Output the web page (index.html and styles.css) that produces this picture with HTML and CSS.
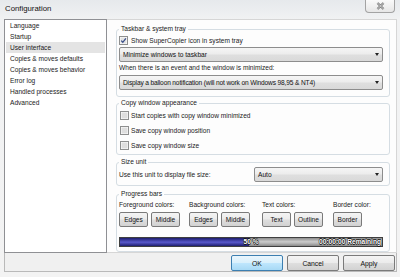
FILE: index.html
```html
<!DOCTYPE html>
<html>
<head>
<meta charset="utf-8">
<title>Configuration</title>
<link rel="stylesheet" href="styles.css">
</head>
<body>
<div class="window">
  <div class="titlebar">
    <span class="title">Configuration</span>
    <div class="close">
      <svg width="9" height="8" viewBox="0 0 9 8"><path d="M1.5 1 L7.5 7 M7.5 1 L1.5 7" stroke="#6d6d6d" stroke-width="2.2" fill="none"/><path d="M1.5 1 L7.5 7 M7.5 1 L1.5 7" stroke="#f4f4f4" stroke-width="0.8" fill="none"/></svg>
    </div>
  </div>
  <div class="client">
    <div class="main">
      <ul class="list">
        <li class="item">Language</li>
        <li class="item">Startup</li>
        <li class="item selected">User interface</li>
        <li class="item">Copies &amp; moves defaults</li>
        <li class="item">Copies &amp; moves behavior</li>
        <li class="item">Error log</li>
        <li class="item">Handled processes</li>
        <li class="item">Advanced</li>
      </ul>
      <div class="panel">
        <fieldset class="group g1">
          <legend>Taskbar &amp; system tray</legend>
          <label class="check first">
            <svg class="box" width="9" height="9" viewBox="0 0 9 9"><rect x="0.5" y="0.5" width="8" height="8" fill="#fff" stroke="#8e8f8f"/><rect x="1.5" y="1.5" width="6" height="6" fill="#e3e3e3"/><path d="M2.2 4.6 L3.8 6.3 L6.9 2.3" stroke="#3a4f8a" stroke-width="1.3" fill="none"/></svg>
            <span>Show SuperCopier icon in system tray</span>
          </label>
          <div class="combo c1"><span>Minimize windows to taskbar</span><i class="arrow"></i></div>
          <div class="label l1">When there is an event and the window is minimized:</div>
          <div class="combo c2"><span class="narrow">Display a balloon notification (will not work on Windows 98,95 &amp; NT4)</span><i class="arrow"></i></div>
        </fieldset>
        <fieldset class="group g2">
          <legend>Copy window appearance</legend>
          <label class="check r1">
            <svg class="box" width="9" height="9" viewBox="0 0 9 9"><rect x="0.5" y="0.5" width="8" height="8" fill="#fff" stroke="#8e8f8f"/><rect x="1.5" y="1.5" width="6" height="6" fill="#dedede"/></svg>
            <span>Start copies with copy window minimized</span>
          </label>
          <label class="check r2">
            <svg class="box" width="9" height="9" viewBox="0 0 9 9"><rect x="0.5" y="0.5" width="8" height="8" fill="#fff" stroke="#8e8f8f"/><rect x="1.5" y="1.5" width="6" height="6" fill="#dedede"/></svg>
            <span>Save copy window position</span>
          </label>
          <label class="check r2">
            <svg class="box" width="9" height="9" viewBox="0 0 9 9"><rect x="0.5" y="0.5" width="8" height="8" fill="#fff" stroke="#8e8f8f"/><rect x="1.5" y="1.5" width="6" height="6" fill="#dedede"/></svg>
            <span>Save copy window size</span>
          </label>
        </fieldset>
        <fieldset class="group g3">
          <legend>Size unit</legend>
          <div class="sizerow">
            <span>Use this unit to display file size:</span>
            <div class="combo c3"><span>Auto</span><i class="arrow"></i></div>
          </div>
        </fieldset>
        <fieldset class="group g4">
          <legend>Progress bars</legend>
          <div class="colors">
            <div class="col">
              <div class="clabel">Foreground colors:</div>
              <div class="btns"><button class="btn sm">Edges</button><button class="btn sm">Middle</button></div>
            </div>
            <div class="col">
              <div class="clabel">Background colors:</div>
              <div class="btns"><button class="btn sm">Edges</button><button class="btn sm">Middle</button></div>
            </div>
            <div class="col">
              <div class="clabel">Text colors:</div>
              <div class="btns"><button class="btn sm">Text</button><button class="btn sm">Outline</button></div>
            </div>
            <div class="col">
              <div class="clabel">Border color:</div>
              <div class="btns"><button class="btn sm">Border</button></div>
            </div>
          </div>
          <div class="bar">
            <div class="fill" style="width:129px"></div>
            <span class="pct">50 %</span>
            <span class="remain">00:00:00 Remaining</span>
          </div>
        </fieldset>
      </div>
    </div>
    <div class="footer">
      <button class="btn big ok">OK</button>
      <button class="btn big">Cancel</button>
      <button class="btn big">Apply</button>
    </div>
  </div>
</div>
</body>
</html>
```
FILE: styles.css
```css
* { box-sizing: border-box; }
html, body { margin: 0; padding: 0; }
body {
  width: 400px; height: 277px; overflow: hidden;
  background: #fff;
  font-family: "Liberation Sans", Arial, sans-serif;
  font-size: 6.6px;
  color: #1b1b1b;
}
.window {
  width: 400px; height: 277px;
  background: linear-gradient(180deg, #e6e9ec 0, #f1f2f3 20px, #f3f3f3 100%);
  display: flex; flex-direction: column;
}
.titlebar {
  height: 19px; flex: none;
  display: flex; justify-content: space-between; align-items: flex-start;
  padding: 0 5px 0 5px;
}
.title { font-size: 7.8px; line-height: 18px; color: #111; }
.close {
  width: 30px; height: 13px;
  border: 1px solid #a3a3a3; border-top: none;
  border-radius: 0 0 4px 4px;
  background: linear-gradient(#fafafa, #e6e6e6);
  display: flex; align-items: center; justify-content: center;
}
.client {
  margin: 0 3px 0 4px; height: 253px;
  display: flex; flex-direction: column;
}
.main { display: flex; height: 234px; }
.list {
  width: 103px; margin: 0; padding: 0; list-style: none;
  border: 1px solid #8f9094; background: #fff;
}
.item { height: 11px; line-height: 11px; margin: 0 1px; padding-left: 4px; white-space: nowrap; }
.item.selected { background: #e4e4e4; }
.panel {
  flex: 1; background: #fdfdfd;
  border: 1px solid #d6d6d6; border-left: none;
  padding: 4px 6px 0 9px;
  display: flex; flex-direction: column;
}
.group {
  margin: 0; min-width: 0;
  border: 1px solid #d5dde3; border-radius: 3px;
  padding: 0 6px 0 2px;
  display: flex; flex-direction: column;
}
.group legend {
  padding: 0 2px; margin: 0;
  height: 10px; line-height: 10px; color: #1b1b1b;
}
.g1 { padding-bottom: 6px; }
.g2 { margin-top: 1px; padding-bottom: 4px; }
.g3 { margin-top: 2px; padding-bottom: 3px; }
.g4 { margin-top: 3px; padding-bottom: 4px; }
.check { display: flex; align-items: center; height: 10px; gap: 3px; }
.check .box { flex: none; }
.check.first { margin-top: 1px; }
.check.r1 { margin-top: 2px; }
.check.r2 { margin-top: 5px; }
.g2 .check .box { margin-left: 1px; }
.g2 .check { gap: 2px; }
.combo {
  height: 15px;
  border: 1px solid #8d8d8d; border-radius: 2px;
  background: linear-gradient(#f5f5f5 0, #ececec 48%, #dfdfdf 52%, #d9d9d9 100%);
  display: flex; align-items: center; justify-content: space-between;
  padding: 0 3px 0 3px; white-space: nowrap; color: #111;
}
.narrow { letter-spacing: -0.15px; }
.arrow {
  width: 0; height: 0;
  border-left: 2.5px solid transparent; border-right: 2.5px solid transparent;
  border-top: 3px solid #222;
}
.c1 { margin-top: 2px; }
.label { height: 10px; line-height: 10px; margin-top: 1px; white-space: nowrap; }
.c2 { margin-top: 2px; }
.sizerow { display: flex; justify-content: space-between; align-items: center; }
.c3 { width: 129px; height: 15px; }
.colors {
  display: grid; grid-template-columns: 70px 73px 71px auto;
  margin-top: 1px;
}
.clabel { height: 10px; line-height: 10px; white-space: nowrap; }
.btns { display: flex; gap: 3px; margin-top: 2px; }
.btn {
  font-family: inherit; font-size: 6.6px; color: #111;
  border: 1px solid #7a7a7a; border-radius: 2px;
  background: linear-gradient(#f4f4f4 0, #ebebeb 48%, #dedede 52%, #d2d2d2 100%);
  padding: 0; margin: 0;
  display: flex; align-items: center; justify-content: center;
}
.btn.sm { width: 29px; height: 15px; }
.bar {
  position: relative; margin-top: 10px;
  height: 10px; width: 264px;
  border: 1px solid #3f3f3f;
  background: linear-gradient(#8e8e8e 0, #c9c9c9 45%, #bdbdbd 60%, #8a8a8a 100%);
  display: flex;
}
.fill {
  height: 100%;
  background: linear-gradient(#1c1c6a 0, #4b4bb8 40%, #5656c8 55%, #1e1e70 100%);
}
.pct, .remain {
  position: absolute; top: 0; line-height: 8px;
  font-weight: bold; color: #fff; font-size: 6.6px;
  text-shadow: -0.6px 0 #111, 0.6px 0 #111, 0 -0.6px #111, 0 0.6px #111;
}
.pct { left: 0; right: 0; text-align: center; }
.remain { right: 1px; }
.footer {
  height: 19px; flex: none;
  background: #f0f0f0;
  border: 1px solid #b9b9b9; border-top: none;
  display: flex; justify-content: flex-end; gap: 4px;
  padding: 2px 1px 0 0;
}
.btn.big { width: 52px; height: 16px; font-size: 6.8px; }
.btn.ok {
  border-color: #3c7fb1;
  background: linear-gradient(#eaf6fd 0, #d9f0fc 48%, #bee6fd 52%, #a7d9f5 100%);
}
```
